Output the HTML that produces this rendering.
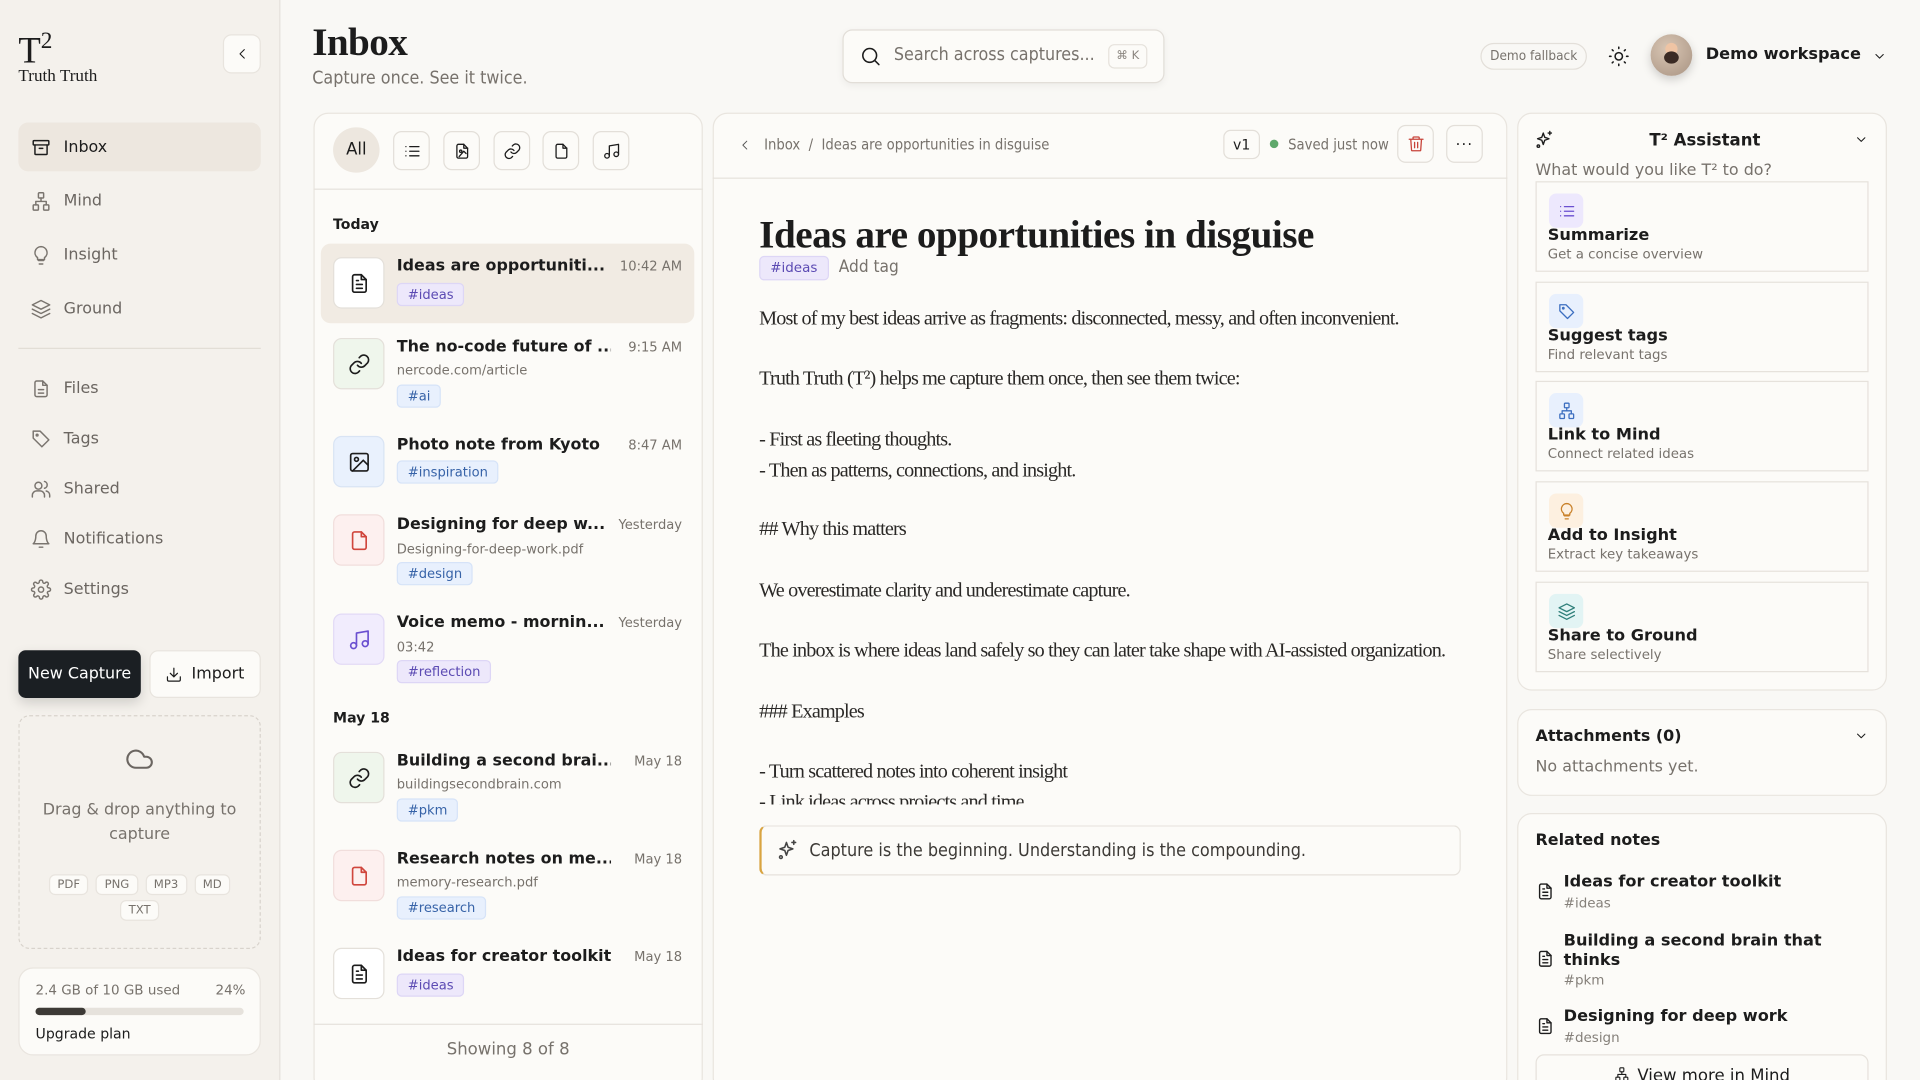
<!DOCTYPE html>
<html><head><meta charset="utf-8">
<style>
*{box-sizing:border-box;margin:0;padding:0}
html,body{width:1920px;height:1080px;overflow:hidden;background:#f9f8f5}
#w{width:1568px;height:882px;transform:scale(1.2244898);transform-origin:0 0;position:relative;overflow:hidden;background:#f9f8f5;font-family:"DejaVu Sans","Liberation Sans",sans-serif;color:#1c1c1c}
.a{position:absolute}
.cond{font-family:"DejaVu Sans Condensed","DejaVu Sans",sans-serif;font-stretch:condensed}
.serif{font-family:"Liberation Serif",serif}
svg{fill:none;stroke:currentColor;stroke-width:1.7;stroke-linecap:round;stroke-linejoin:round}
.side{left:0;top:0;width:229px;height:882px;background:#f4f1ec;border-right:1px solid #e6e2dc}
.nav{left:15px;width:198px;height:40px;display:flex;align-items:center;padding-left:10px;font-size:13px;color:#6b6661;border-radius:8px}
.nav svg{width:17px;height:17px;margin-right:10px;color:#7a756f}
.nav.act{background:#ede7df;color:#1c1c1c}
.nav.act svg{color:#1c1c1c}
.card{background:#fcfbf8;border:1px solid #e9e5df;border-radius:12px}
.ib{width:30px;height:32px;border:1px solid #e3dfd9;border-radius:7px;display:flex;align-items:center;justify-content:center;background:#fcfbf8}
.ib svg{width:15px;height:15px}
.item{left:262px;width:305px}
.ic{position:absolute;left:10px;width:42px;height:42px;border-radius:7px;border:1px solid #e4e0da;display:flex;align-items:center;justify-content:center;background:#fff}
.ic svg{width:19px;height:19px}
.tt{position:absolute;left:62px;font-weight:bold;font-size:13px;white-space:nowrap;max-width:175px;overflow:hidden}
.tm{position:absolute;right:10px;font-size:10.7px;color:#77726c}
.sb{position:absolute;left:62px;font-size:10.7px;color:#77726c}
.tag{position:absolute;left:62px;height:19px;padding:0 8px;border-radius:4px;font-size:10.7px;line-height:18px;border:1px solid}
.tp{background:#ede8fb;color:#5b4ab3;border-color:#ddd6f6}
.tb{background:#e8f0fd;color:#3763a8;border-color:#d6e3f8}
.body p{position:absolute;left:620px;font-family:"Liberation Serif",serif;font-size:16.5px;letter-spacing:-0.7px;color:#2a2826;white-space:nowrap}
.act2{left:1254px;width:272px;height:74px;border:1px solid #e6e2dc;background:#fcfbf8}
.act2 .bx{position:absolute;left:10px;top:9px;width:28px;height:28px;border-radius:6px;display:flex;align-items:center;justify-content:center}
.act2 .bx svg{width:15px;height:15px}
.act2 b{position:absolute;left:9px;top:36px;font-size:13.2px}
.act2 span{position:absolute;left:9px;top:52px;font-size:10.9px;color:#77726c}
.rel{left:1254px;width:272px}
.rel svg{position:absolute;left:0;width:16px;height:16px}
.rel b{position:absolute;left:23px;font-size:13.2px;line-height:16px}
.rel span{position:absolute;left:23px;font-size:11px;color:#85807a}
.ft{height:17px;padding:0 6px;border:1px solid #e8e4de;border-radius:5px;background:#fcfbf8;font-size:9.5px;color:#77726c;line-height:15px}
</style></head><body><div id="w">

<!-- Sidebar -->
<div class="a side"></div>
<div class="a serif" style="left:15px;top:17px;font-size:30px;line-height:34px">T<span style="font-size:19px;vertical-align:12px">2</span></div>
<div class="a serif" style="left:15px;top:55px;font-size:14px">Truth Truth</div>
<div class="a" style="left:182px;top:28px;width:31px;height:32px;border:1px solid #e8e4de;border-radius:7px;background:#fcfbf8;display:flex;align-items:center;justify-content:center"><svg width="12" height="12" viewBox="0 0 24 24"><path d="M15 5l-7 7 7 7"/></svg></div>

<div class="a nav act" style="top:100px"><svg viewBox="0 0 24 24"><rect x="3" y="4" width="18" height="5" rx="1"/><path d="M5 9v10a1 1 0 0 0 1 1h12a1 1 0 0 0 1-1V9M10 13h4"/></svg>Inbox</div>
<div class="a nav" style="top:144px"><svg viewBox="0 0 24 24"><rect x="9" y="2" width="6" height="6" rx="1"/><rect x="3" y="16" width="6" height="6" rx="1"/><rect x="15" y="16" width="6" height="6" rx="1"/><path d="M12 8v4M6 16v-4h12v4"/></svg>Mind</div>
<div class="a nav" style="top:188px"><svg viewBox="0 0 24 24"><path d="M9 18h6M10 22h4M12 2a7 7 0 0 0-4 12.7V17h8v-2.3A7 7 0 0 0 12 2z"/></svg>Insight</div>
<div class="a nav" style="top:232px"><svg viewBox="0 0 24 24"><path d="M12 2 2 7l10 5 10-5z"/><path d="M2 12l10 5 10-5M2 17l10 5 10-5"/></svg>Ground</div>
<div class="a" style="left:15px;top:284px;width:198px;height:1px;background:#e2ddd6"></div>
<div class="a nav" style="top:297px"><svg viewBox="0 0 24 24"><path d="M14 3H7a2 2 0 0 0-2 2v14a2 2 0 0 0 2 2h10a2 2 0 0 0 2-2V8z"/><path d="M14 3v5h5M9 13h6M9 17h6"/></svg>Files</div>
<div class="a nav" style="top:338px"><svg viewBox="0 0 24 24"><path d="M3 3h8l10 10-8 8L3 11z"/><circle cx="7.5" cy="7.5" r="1"/></svg>Tags</div>
<div class="a nav" style="top:379px"><svg viewBox="0 0 24 24"><circle cx="9" cy="8" r="4"/><path d="M2 21v-2a5 5 0 0 1 5-5h4a5 5 0 0 1 5 5v2M16 3.1a4 4 0 0 1 0 7.8M22 21v-2a5 5 0 0 0-4-4.9"/></svg>Shared</div>
<div class="a nav" style="top:420px"><svg viewBox="0 0 24 24"><path d="M6 8a6 6 0 0 1 12 0c0 7 3 9 3 9H3s3-2 3-9M10 21h4"/></svg>Notifications</div>
<div class="a nav" style="top:461px"><svg viewBox="0 0 24 24"><circle cx="12" cy="12" r="3"/><path d="M19.4 15a1.7 1.7 0 0 0 .3 1.8l.1.1a2 2 0 1 1-2.8 2.8l-.1-.1a1.7 1.7 0 0 0-1.8-.3 1.7 1.7 0 0 0-1 1.5V21a2 2 0 1 1-4 0v-.1a1.7 1.7 0 0 0-1.1-1.5 1.7 1.7 0 0 0-1.8.3l-.1.1a2 2 0 1 1-2.8-2.8l.1-.1a1.7 1.7 0 0 0 .3-1.8 1.7 1.7 0 0 0-1.5-1H3a2 2 0 1 1 0-4h.1a1.7 1.7 0 0 0 1.5-1.1 1.7 1.7 0 0 0-.3-1.8l-.1-.1a2 2 0 1 1 2.8-2.8l.1.1a1.7 1.7 0 0 0 1.8.3H9a1.7 1.7 0 0 0 1-1.5V3a2 2 0 1 1 4 0v.1a1.7 1.7 0 0 0 1 1.5 1.7 1.7 0 0 0 1.8-.3l.1-.1a2 2 0 1 1 2.8 2.8l-.1.1a1.7 1.7 0 0 0-.3 1.8V9a1.7 1.7 0 0 0 1.5 1H21a2 2 0 1 1 0 4h-.1a1.7 1.7 0 0 0-1.5 1z"/></svg>Settings</div>

<div class="a" style="left:15px;top:531px;width:100px;height:39px;background:#1b1f23;border-radius:6px;color:#fff;font-size:13px;line-height:39px;text-align:center;box-shadow:0 4px 10px rgba(0,0,0,.15);white-space:nowrap">New Capture</div>
<div class="a" style="left:122px;top:531px;width:91px;height:39px;background:#fcfbf8;border:1px solid #e8e4de;border-radius:7px;font-size:13px;display:flex;align-items:center;justify-content:center"><svg width="14" height="14" viewBox="0 0 24 24" style="margin-right:7px"><path d="M21 15v4a2 2 0 0 1-2 2H5a2 2 0 0 1-2-2v-4M7 10l5 5 5-5M12 15V3"/></svg>Import</div>

<div class="a" style="left:15px;top:584px;width:198px;height:191px;border:1px dashed #d8d3cc;border-radius:9px"></div>
<svg class="a" style="left:101px;top:608px;color:#6b6661" width="26" height="24" viewBox="0 0 24 24"><path d="M17.5 19H9a7 7 0 1 1 6.7-9h1.8a4.5 4.5 0 1 1 0 9z"/></svg>
<div class="a" style="left:15px;top:652px;width:198px;text-align:center;font-size:13px;line-height:20px;color:#77726c">Drag &amp; drop anything to<br>capture</div>
<div class="a" style="left:15px;top:714px;width:198px;display:flex;justify-content:center;gap:6px"><span class="ft">PDF</span><span class="ft">PNG</span><span class="ft">MP3</span><span class="ft">MD</span></div>
<div class="a" style="left:15px;top:735px;width:198px;display:flex;justify-content:center"><span class="ft">TXT</span></div>

<div class="a card" style="left:15px;top:790px;width:198px;height:72px"></div>
<div class="a" style="left:29px;top:802px;font-size:11px;color:#77726c">2.4 GB of 10 GB used</div>
<div class="a" style="left:176px;top:802px;font-size:11px;color:#77726c">24%</div>
<div class="a" style="left:29px;top:823px;width:170px;height:6px;border-radius:3px;background:#e6e2dc"><div style="width:41px;height:6px;border-radius:3px;background:#3d3a36"></div></div>
<div class="a" style="left:29px;top:837px;font-size:11.5px">Upgrade plan</div>

<!-- Header -->
<div class="a serif" style="left:255px;top:16px;font-size:32px;font-weight:bold;letter-spacing:-0.5px">Inbox</div>
<div class="a cond" style="left:255px;top:56px;font-size:14.5px;color:#77726c">Capture once. See it twice.</div>
<div class="a" style="left:688px;top:24px;width:263px;height:44px;background:#fcfbf8;border:1px solid #e2ded8;border-radius:8px;box-shadow:0 2px 6px rgba(0,0,0,.05)"></div>
<svg class="a" style="left:702px;top:37px" width="18" height="18" viewBox="0 0 24 24" stroke-width="2"><circle cx="11" cy="11" r="7.5"/><path d="M21 21l-4.5-4.5"/></svg>
<div class="a cond" style="left:730px;top:37px;font-size:14.5px;color:#77726c">Search across captures...</div>
<div class="a" style="left:905px;top:36px;width:32px;height:20px;border:1px solid #e6e2dc;border-radius:5px;font-size:9.5px;color:#8a857f;text-align:center;line-height:18px">⌘ K</div>
<div class="a cond" style="left:1209px;top:35px;width:87px;height:22px;border:1px solid #e3dfd9;border-radius:11px;font-size:11px;color:#77726c;text-align:center;line-height:20px">Demo fallback</div>
<svg class="a" style="left:1313px;top:37px" width="18" height="18" viewBox="0 0 24 24" stroke-width="2"><circle cx="12" cy="12" r="4"/><path d="M12 2v1.5M12 20.5V22M4.9 4.9l1 1M18.1 18.1l1 1M2 12h1.5M20.5 12H22M4.9 19.1l1-1M18.1 5.9l1-1"/></svg>
<div class="a" style="left:1348px;top:28px;width:34px;height:34px;border-radius:50%;background:radial-gradient(circle at 40% 35%,#d9c6b4,#a89382);box-shadow:0 3px 8px rgba(0,0,0,.18);overflow:hidden"><div style="position:absolute;left:12px;top:7px;width:10px;height:10px;border-radius:50%;background:#efc4a4"></div><div style="position:absolute;left:11px;top:14px;width:12px;height:10px;border-radius:50%;background:#3a2a24"></div></div>
<div class="a" style="left:1393px;top:37px;font-size:13.2px;font-weight:bold">Demo workspace</div>
<svg class="a" style="left:1529px;top:40px" width="12" height="12" viewBox="0 0 24 24" stroke-width="2.4"><path d="M6 9l6 6 6-6"/></svg>

<!-- List panel -->
<div class="a card" style="left:256px;top:92px;width:318px;height:800px"></div>
<div class="a" style="left:272px;top:104px;width:38px;height:37px;border-radius:19px;background:#ede7df;font-size:13.5px;line-height:37px;text-align:center">All</div>
<div class="a ib" style="left:321px;top:107px"><svg viewBox="0 0 24 24"><path d="M9 6h12M9 12h12M9 18h12M4 6h.01M4 12h.01M4 18h.01"/></svg></div>
<div class="a ib" style="left:362px;top:107px"><svg viewBox="0 0 24 24"><path d="M14 3H7a2 2 0 0 0-2 2v14a2 2 0 0 0 2 2h10a2 2 0 0 0 2-2V8z"/><path d="M14 3v5h5"/><circle cx="10" cy="12" r="1.5"/><path d="M17 15l-3-3-6 7"/></svg></div>
<div class="a ib" style="left:403px;top:107px"><svg viewBox="0 0 24 24"><path d="M10 13a5 5 0 0 0 7.5.5l3-3a5 5 0 0 0-7-7l-1.7 1.7"/><path d="M14 11a5 5 0 0 0-7.5-.5l-3 3a5 5 0 0 0 7 7l1.7-1.7"/></svg></div>
<div class="a ib" style="left:443px;top:107px"><svg viewBox="0 0 24 24"><path d="M14 3H7a2 2 0 0 0-2 2v14a2 2 0 0 0 2 2h10a2 2 0 0 0 2-2V8z"/><path d="M14 3v5h5"/></svg></div>
<div class="a ib" style="left:484px;top:107px"><svg viewBox="0 0 24 24"><path d="M9 18V5l12-2v13"/><circle cx="6" cy="18" r="3"/><circle cx="18" cy="16" r="3"/></svg></div>
<div class="a" style="left:256px;top:154px;width:318px;height:1px;background:#e6e2dc"></div>
<div class="a" style="left:272px;top:176px;font-size:11.5px;font-weight:bold">Today</div>

<div class="a item" style="top:199px;height:65px;background:#f1ebe3;border-radius:8px">
 <div class="ic" style="top:11px"><svg viewBox="0 0 24 24"><path d="M14 3H7a2 2 0 0 0-2 2v14a2 2 0 0 0 2 2h10a2 2 0 0 0 2-2V8z"/><path d="M14 3v5h5M9 13h6M9 17h6M9 9h2"/></svg></div>
 <div class="tt" style="top:11px">Ideas are opportuniti...</div><div class="tm" style="top:12px">10:42 AM</div>
 <div class="tag tp" style="top:32px">#ideas</div>
</div>
<div class="a item" style="top:264px;height:80px">
 <div class="ic" style="top:12px;background:#eff6ec"><svg viewBox="0 0 24 24"><path d="M10 13a5 5 0 0 0 7.5.5l3-3a5 5 0 0 0-7-7l-1.7 1.7"/><path d="M14 11a5 5 0 0 0-7.5-.5l-3 3a5 5 0 0 0 7 7l1.7-1.7"/></svg></div>
 <div class="tt" style="top:12px">The no-code future of ...</div><div class="tm" style="top:13px">9:15 AM</div>
 <div class="sb" style="top:32px">nercode.com/article</div>
 <div class="tag tb" style="top:50px">#ai</div>
</div>
<div class="a item" style="top:344px;height:65px">
 <div class="ic" style="top:12px;background:#e9f1fd;border-color:#d9e4f4"><svg viewBox="0 0 24 24"><rect x="3" y="3" width="18" height="18" rx="2"/><circle cx="9" cy="9" r="2"/><path d="M21 15l-5-5L5 21"/></svg></div>
 <div class="tt" style="top:12px">Photo note from Kyoto</div><div class="tm" style="top:13px">8:47 AM</div>
 <div class="tag tb" style="top:32px">#inspiration</div>
</div>
<div class="a item" style="top:409px;height:80px">
 <div class="ic" style="top:11px;background:#fdf0ef;border-color:#f1dedc;color:#d0463d"><svg viewBox="0 0 24 24"><path d="M14 3H7a2 2 0 0 0-2 2v14a2 2 0 0 0 2 2h10a2 2 0 0 0 2-2V8z"/><path d="M14 3v5h5"/></svg></div>
 <div class="tt" style="top:12px">Designing for deep w...</div><div class="tm" style="top:13px">Yesterday</div>
 <div class="sb" style="top:33px">Designing-for-deep-work.pdf</div>
 <div class="tag tb" style="top:50px">#design</div>
</div>
<div class="a item" style="top:489px;height:80px">
 <div class="ic" style="top:12px;background:#f1ecfd;border-color:#e2daf6;color:#6a4fd0"><svg viewBox="0 0 24 24"><path d="M9 18V5l12-2v13"/><circle cx="6" cy="18" r="3"/><circle cx="18" cy="16" r="3"/></svg></div>
 <div class="tt" style="top:12px">Voice memo - mornin...</div><div class="tm" style="top:13px">Yesterday</div>
 <div class="sb" style="top:33px">03:42</div>
 <div class="tag tp" style="top:50px">#reflection</div>
</div>
<div class="a" style="left:272px;top:579px;font-size:11.5px;font-weight:bold">May 18</div>
<div class="a item" style="top:602px;height:80px">
 <div class="ic" style="top:12px;background:#eff6ec"><svg viewBox="0 0 24 24"><path d="M10 13a5 5 0 0 0 7.5.5l3-3a5 5 0 0 0-7-7l-1.7 1.7"/><path d="M14 11a5 5 0 0 0-7.5-.5l-3 3a5 5 0 0 0 7 7l1.7-1.7"/></svg></div>
 <div class="tt" style="top:12px">Building a second brai...</div><div class="tm" style="top:13px">May 18</div>
 <div class="sb" style="top:32px">buildingsecondbrain.com</div>
 <div class="tag tb" style="top:50px">#pkm</div>
</div>
<div class="a item" style="top:682px;height:80px">
 <div class="ic" style="top:12px;background:#fdf0ef;border-color:#f1dedc;color:#d0463d"><svg viewBox="0 0 24 24"><path d="M14 3H7a2 2 0 0 0-2 2v14a2 2 0 0 0 2 2h10a2 2 0 0 0 2-2V8z"/><path d="M14 3v5h5"/></svg></div>
 <div class="tt" style="top:12px">Research notes on me...</div><div class="tm" style="top:13px">May 18</div>
 <div class="sb" style="top:32px">memory-research.pdf</div>
 <div class="tag tb" style="top:50px">#research</div>
</div>
<div class="a item" style="top:762px;height:70px">
 <div class="ic" style="top:12px"><svg viewBox="0 0 24 24"><path d="M14 3H7a2 2 0 0 0-2 2v14a2 2 0 0 0 2 2h10a2 2 0 0 0 2-2V8z"/><path d="M14 3v5h5M9 13h6M9 17h6M9 9h2"/></svg></div>
 <div class="tt" style="top:12px">Ideas for creator toolkit</div><div class="tm" style="top:13px">May 18</div>
 <div class="tag tp" style="top:33px">#ideas</div>
</div>
<div class="a" style="left:256px;top:836px;width:318px;height:1px;background:#e6e2dc"></div>
<div class="a" style="left:256px;top:849px;width:318px;text-align:center;font-size:13.5px;color:#77726c">Showing 8 of 8</div>

<!-- Editor -->
<div class="a card" style="left:582px;top:92px;width:649px;height:800px"></div>
<div class="a" style="left:582px;top:145px;width:649px;height:1px;background:#e6e2dc"></div>
<svg class="a" style="left:603px;top:113px;color:#555" width="11" height="11" viewBox="0 0 24 24" stroke-width="2.2"><path d="M15 5l-7 7 7 7"/></svg>
<div class="a cond" style="left:624px;top:111px;font-size:12px;color:#77726c">Inbox&nbsp;&nbsp;/&nbsp;&nbsp;Ideas are opportunities in disguise</div>
<div class="a" style="left:999px;top:106px;width:30px;height:24px;border:1px solid #e3dfd9;border-radius:6px;font-size:11.5px;text-align:center;line-height:22px;background:#fcfbf8">v1</div>
<div class="a" style="left:1037px;top:114px;width:7px;height:7px;border-radius:50%;background:#5ea86b"></div>
<div class="a cond" style="left:1052px;top:111px;font-size:12px;color:#77726c">Saved just now</div>
<div class="a ib" style="left:1141px;top:102px;width:30px;height:31px;color:#c8443a"><svg viewBox="0 0 24 24"><path d="M3 6h18M8 6V4a1 1 0 0 1 1-1h6a1 1 0 0 1 1 1v2M5 6l1 14a1 1 0 0 0 1 1h10a1 1 0 0 0 1-1l1-14M10 10v7M14 10v7"/></svg></div>
<div class="a ib" style="left:1181px;top:102px;width:30px;height:31px;font-size:12px;letter-spacing:1px">···</div>

<div class="a serif" style="left:620px;top:173px;font-size:32px;font-weight:bold;letter-spacing:-0.4px;white-space:nowrap">Ideas are opportunities in disguise</div>
<div class="a tag tp" style="left:620px;top:209px;height:20px;line-height:18px;font-size:11px">#ideas</div>
<div class="a cond" style="left:685px;top:210px;font-size:14px;color:#77726c">Add tag</div>
<div class="body">
<p style="top:250px">Most of my best ideas arrive as fragments: disconnected, messy, and often inconvenient.</p>
<p style="top:299px">Truth Truth (T²) helps me capture them once, then see them twice:</p>
<p style="top:349px">- First as fleeting thoughts.</p>
<p style="top:374px">- Then as patterns, connections, and insight.</p>
<p style="top:422px">## Why this matters</p>
<p style="top:472px">We overestimate clarity and underestimate capture.</p>
<p style="top:521px">The inbox is where ideas land safely so they can later take shape with AI-assisted organization.</p>
<p style="top:571px">### Examples</p>
<p style="top:620px">- Turn scattered notes into coherent insight</p>
<p style="top:645px;height:12px;overflow:hidden">- Link ideas across projects and time</p>
</div>
<div class="a" style="left:620px;top:674px;width:573px;height:41px;border:1px solid #e6e2dc;border-left:2px solid #d9a441;border-radius:6px;background:#fcfbf8"></div>
<svg class="a" style="left:634px;top:685px;color:#444" width="18" height="18" viewBox="0 0 24 24"><path d="M11 4l1.8 5.2L18 11l-5.2 1.8L11 18l-1.8-5.2L4 11l5.2-1.8z"/><path d="M19 2v4M17 4h4"/><circle cx="5" cy="20" r="1.5"/></svg>
<div class="a cond" style="left:661px;top:686px;font-size:14.6px;color:#3d3a36">Capture is the beginning. Understanding is the compounding.</div>

<!-- Right panel -->
<div class="a card" style="left:1239px;top:92px;width:302px;height:472px"></div>
<svg class="a" style="left:1253px;top:106px" width="16" height="16" viewBox="0 0 24 24" stroke-width="2"><path d="M11 4l1.8 5.2L18 11l-5.2 1.8L11 18l-1.8-5.2L4 11l5.2-1.8z"/><path d="M19 2v4M17 4h4"/><circle cx="5" cy="20" r="1.5"/></svg>
<div class="a" style="left:1347px;top:107px;font-size:13.5px;font-weight:bold">T² Assistant</div>
<svg class="a" style="left:1514px;top:108px" width="12" height="12" viewBox="0 0 24 24" stroke-width="2.4"><path d="M6 9l6 6 6-6"/></svg>
<div class="a" style="left:1254px;top:132px;font-size:13px;color:#77726c">What would you like T² to do?</div>

<div class="a act2" style="top:148px"><div class="bx" style="background:#ede8fd;color:#6a4fd0"><svg viewBox="0 0 24 24"><path d="M9 6h12M9 12h12M9 18h12M4 6h.01M4 12h.01M4 18h.01"/></svg></div><b>Summarize</b><span>Get a concise overview</span></div>
<div class="a act2" style="top:230px"><div class="bx" style="background:#e8f0fd;color:#3d6fc0"><svg viewBox="0 0 24 24"><path d="M3 3h8l10 10-8 8L3 11z"/><circle cx="7.5" cy="7.5" r="1"/></svg></div><b>Suggest tags</b><span>Find relevant tags</span></div>
<div class="a act2" style="top:311px"><div class="bx" style="background:#e8f0fd;color:#3d6fc0"><svg viewBox="0 0 24 24"><rect x="9" y="2" width="6" height="6" rx="1"/><rect x="3" y="16" width="6" height="6" rx="1"/><rect x="15" y="16" width="6" height="6" rx="1"/><path d="M12 8v4M6 16v-4h12v4"/></svg></div><b>Link to Mind</b><span>Connect related ideas</span></div>
<div class="a act2" style="top:393px"><div class="bx" style="background:#fdf0e0;color:#c9812a"><svg viewBox="0 0 24 24"><path d="M9 18h6M10 22h4M12 2a7 7 0 0 0-4 12.7V17h8v-2.3A7 7 0 0 0 12 2z"/></svg></div><b>Add to Insight</b><span>Extract key takeaways</span></div>
<div class="a act2" style="top:475px"><div class="bx" style="background:#e2f4f4;color:#2f7f7a"><svg viewBox="0 0 24 24"><path d="M12 2 2 7l10 5 10-5z"/><path d="M2 12l10 5 10-5M2 17l10 5 10-5"/></svg></div><b>Share to Ground</b><span>Share selectively</span></div>

<div class="a card" style="left:1239px;top:579px;width:302px;height:71px"></div>
<div class="a" style="left:1254px;top:594px;font-size:13px;font-weight:bold">Attachments (0)</div>
<svg class="a" style="left:1514px;top:595px" width="12" height="12" viewBox="0 0 24 24" stroke-width="2.4"><path d="M6 9l6 6 6-6"/></svg>
<div class="a" style="left:1254px;top:619px;font-size:13px;color:#77726c">No attachments yet.</div>

<div class="a card" style="left:1239px;top:664px;width:302px;height:240px"></div>
<div class="a" style="left:1254px;top:679px;font-size:13px;font-weight:bold">Related notes</div>
<div class="a rel" style="top:711px"><svg style="top:9px" viewBox="0 0 24 24"><path d="M14 3H7a2 2 0 0 0-2 2v14a2 2 0 0 0 2 2h10a2 2 0 0 0 2-2V8z"/><path d="M14 3v5h5M9 13h6M9 17h6M9 9h2"/></svg><b style="top:2px">Ideas for creator toolkit</b><span style="top:20px">#ideas</span></div>
<div class="a rel" style="top:759px"><svg style="top:16px" viewBox="0 0 24 24"><path d="M14 3H7a2 2 0 0 0-2 2v14a2 2 0 0 0 2 2h10a2 2 0 0 0 2-2V8z"/><path d="M14 3v5h5M9 13h6M9 17h6M9 9h2"/></svg><b style="top:2px">Building a second brain that<br>thinks</b><span style="top:35px">#pkm</span></div>
<div class="a rel" style="top:821px"><svg style="top:9px" viewBox="0 0 24 24"><path d="M14 3H7a2 2 0 0 0-2 2v14a2 2 0 0 0 2 2h10a2 2 0 0 0 2-2V8z"/><path d="M14 3v5h5M9 13h6M9 17h6M9 9h2"/></svg><b style="top:2px">Designing for deep work</b><span style="top:20px">#design</span></div>
<div class="a" style="left:1254px;top:861px;width:272px;height:40px;border:1px solid #e6e2dc;border-radius:7px;background:#fcfbf8;font-size:13.5px;text-align:center;padding-top:9px"><svg width="13" height="13" viewBox="0 0 24 24" style="vertical-align:-1px;margin-right:6px"><rect x="9" y="2" width="6" height="6" rx="1"/><rect x="3" y="16" width="6" height="6" rx="1"/><rect x="15" y="16" width="6" height="6" rx="1"/><path d="M12 8v4M6 16v-4h12v4"/></svg>View more in Mind</div>

</div></body></html>
